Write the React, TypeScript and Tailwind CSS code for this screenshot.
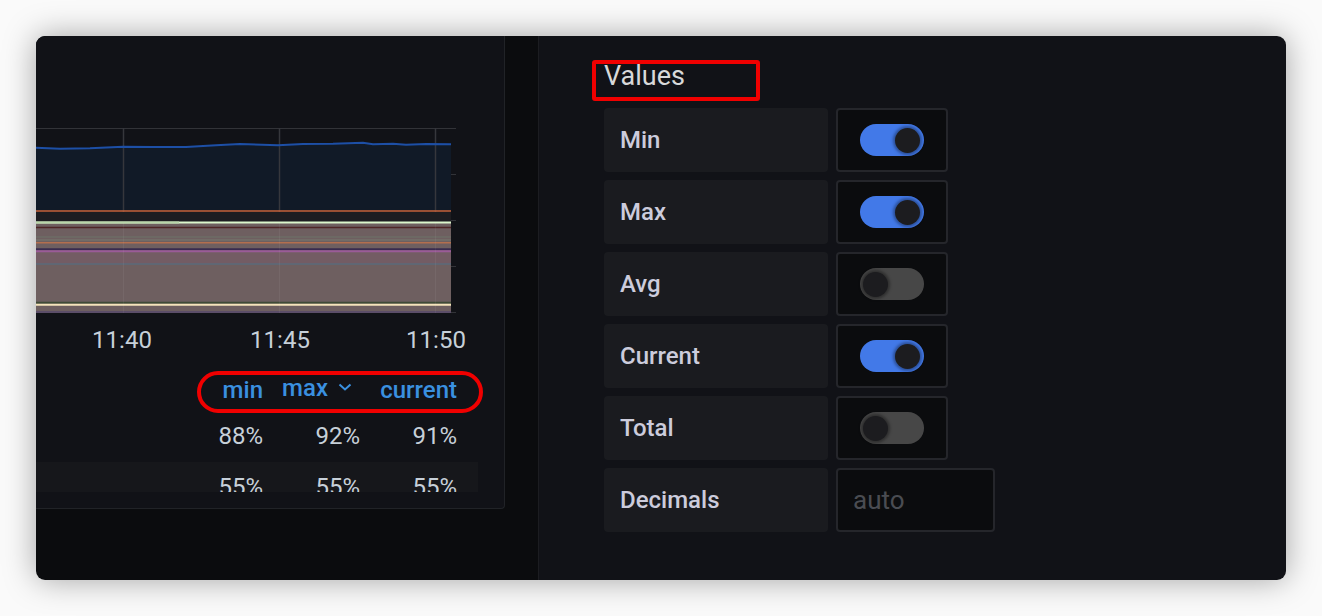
import React from "react";

const bluePts: [number, number][] = [
  [0, 19.7], [24, 20.7], [54, 20.3], [87, 18.7], [117, 19], [150, 19], [180, 17.3],
  [204, 16], [242, 17.3], [267, 16], [297, 15.7], [327, 14.7], [337, 16.3],
  [357, 15.7], [370, 16.7], [390, 16], [415, 16.3],
];

// horizontal series lines inside the stacked band: [y, colour, width]
const bandLines: [number, string, number][] = [
  [99.5, "#4e2626", 1.5],
  [109, "#6d7468", 1],
  [112, "#767a6e", 1],
  [114.7, "#b36f4e", 1.5],
  [121.3, "#3a2b4f", 2],
  [123.3, "#9a5b98", 2],
  [136, "#5b6a7a", 1.5],
  [174.7, "#3f4b37", 2],
  [176.7, "#f5e3bb", 2],
  [184, "#56476b", 1.5],
];

const Chart: React.FC = () => {
  const line = bluePts.map(([x, y]) => `${x},${y}`).join(" ");
  const area = `0,83 ${line} 415,83`;
  return (
    <svg width="420" height="186" viewBox="0 0 420 186" className="block shrink-0">
      {[0.5, 46.5, 92.5, 138.5, 184.5].map((y) => (
        <line key={y} x1="0" x2="420" y1={y} y2={y} stroke="#323338" strokeWidth="1" />
      ))}
      <polygon points={area} fill="#111a27" />
      {[87.5, 243.5, 399.5].map((x) => (
        <line key={x} x1={x} x2={x} y1="0" y2="95" stroke="#36373c" strokeWidth="1.5" />
      ))}
      <polyline points={line} fill="none" stroke="#1d4fa6" strokeWidth="2" />
      <rect x="0" y="84" width="415" height="10" fill="#1d1d21" />
      <line x1="0" x2="415" y1="83" y2="83" stroke="#c8643c" strokeWidth="1.5" />
      <rect x="0" y="95" width="415" height="90" fill="#6e5f60" />
      <rect x="0" y="124" width="415" height="12" fill="#735c64" />
      {bandLines.map(([y, c, w]) => (
        <line key={y} x1="0" x2="415" y1={y} y2={y} stroke={c} strokeWidth={w} />
      ))}
      <line x1="0" x2="415" y1="94.5" y2="94.5" stroke="#dcf6cc" strokeWidth="2" />
      <line x1="0" x2="143" y1="94.5" y2="94.5" stroke="#b9d6aa" strokeWidth="2" />
      {[87.5, 243.5, 399.5].map((x) => (
        <line key={`v${x}`} x1={x} x2={x} y1="95" y2="185" stroke="#ffffff" strokeOpacity="0.05" strokeWidth="1" />
      ))}
    </svg>
  );
};

const Toggle: React.FC<{ on: boolean }> = ({ on }) => (
  <div
    className={
      on
        ? "flex h-[32px] w-[64px] items-center justify-end rounded-full bg-[#4279e8] px-[4px]"
        : "flex h-[32px] w-[64px] items-center justify-start rounded-full bg-[#474747] px-[3px]"
    }
  >
    <div className="h-[25px] w-[25px] rounded-full bg-[#1c1c1f] shadow-[0_0_3px_2px_rgba(0,0,0,0.35)]" />
  </div>
);

const Row: React.FC<{ label: string; children: React.ReactNode }> = ({ label, children }) => (
  <div className="flex gap-[8px]">
    <div className="flex h-[64px] w-[224px] items-center rounded-[4px] bg-[#1a1b1f] pl-[16px] text-[24px] font-medium text-[#ccccdc]">
      {label}
    </div>
    {children}
  </div>
);

const SwitchBox: React.FC<{ on: boolean }> = ({ on }) => (
  <div className="flex h-[64px] w-[112px] items-center justify-center rounded-[4px] border-2 border-[#25262b] bg-[#0b0c0e]">
    <Toggle on={on} />
  </div>
);

export default function App() {
  return (
    <div className="h-[616px] w-[1322px] bg-[#fafafa] pl-[36px] pt-[36px] font-['Roboto',sans-serif]">
      <div className="flex h-[544px] w-[1250px] overflow-hidden rounded-[9px] shadow-[0_0_32px_rgba(0,0,0,0.35)]">
        {/* Left: panel preview */}
        <div className="w-[503px] shrink-0 border-r border-[#1c1d21] bg-[#0b0c0e]">
          <div className="flex h-[473px] w-[469px] flex-col rounded-br-[4px] border-b border-r border-[#212327] bg-[#111217] pt-[92px]">
            <Chart />

            <div className="mt-[12px] flex h-[28px] w-[440px] shrink-0 text-[24px] leading-[28px] text-[#c7d0d9]">
              <span className="ml-[46px] w-[80px] shrink-0 text-center">11:40</span>
              <span className="ml-[78px] w-[80px] shrink-0 text-center">11:45</span>
              <span className="ml-[76px] w-[80px] shrink-0 text-center">11:50</span>
            </div>

            {/* Legend */}
            <div className="relative mt-[22px] flex h-[28px] w-[442px] shrink-0 pr-[21px] text-[24px] font-medium leading-[28px] text-[#3a90e0]">
              <div className="flex-1" />
              <div className="w-[97px] text-right">min</div>
              <div className="flex w-[97px] items-center justify-end gap-[10px] pr-[8px]">
                <span className="mb-[5px]">max</span>
                <svg width="14" height="8" viewBox="0 0 14 8" className="mb-[6px]">
                  <polyline points="1.5,1.5 7,6.5 12.5,1.5" fill="none" stroke="#3a90e0" strokeWidth="2" />
                </svg>
              </div>
              <div className="w-[97px] text-right">current</div>
              <div className="absolute left-[161px] top-[-5px] h-[42px] w-[286px] rounded-full border-4 border-[#f00000]" />
            </div>

            <div className="h-[88px] w-[442px] shrink-0 overflow-hidden text-[24px] leading-[28px] text-[#c7d0d9]">
              <div className="mt-[18px] flex h-[28px] pr-[21px]">
                <div className="flex-1" />
                <div className="w-[97px] text-right">88%</div>
                <div className="w-[97px] text-right">92%</div>
                <div className="w-[97px] text-right">91%</div>
              </div>
              <div className="mt-[12px] flex h-[46px] bg-[#16171b] pr-[21px] pt-[11px]">
                <div className="flex-1" />
                <div className="w-[97px] text-right">55%</div>
                <div className="w-[97px] text-right">55%</div>
                <div className="w-[97px] text-right">55%</div>
              </div>
            </div>
          </div>
        </div>

        {/* Right: options */}
        <div className="flex-1 bg-[#111217] pl-[65px] pt-[24px]">
          <div className="relative h-[32px] text-[27px] leading-[32px] text-[#d8d9da]">
            Values
            <div className="absolute left-[-12px] top-0 h-[41px] w-[168px] rounded-[3px] border-4 border-[#f00000]" />
          </div>

          <div className="mt-[16px] flex flex-col gap-[8px]">
            <Row label="Min"><SwitchBox on /></Row>
            <Row label="Max"><SwitchBox on /></Row>
            <Row label="Avg"><SwitchBox on={false} /></Row>
            <Row label="Current"><SwitchBox on /></Row>
            <Row label="Total"><SwitchBox on={false} /></Row>
            <Row label="Decimals">
              <div className="flex h-[64px] w-[159px] items-center rounded-[4px] border-2 border-[#25262b] bg-[#0b0c0e] pl-[15px] text-[26px] text-[#4a4c52]">
                auto
              </div>
            </Row>
          </div>
        </div>
      </div>
    </div>
  );
}
